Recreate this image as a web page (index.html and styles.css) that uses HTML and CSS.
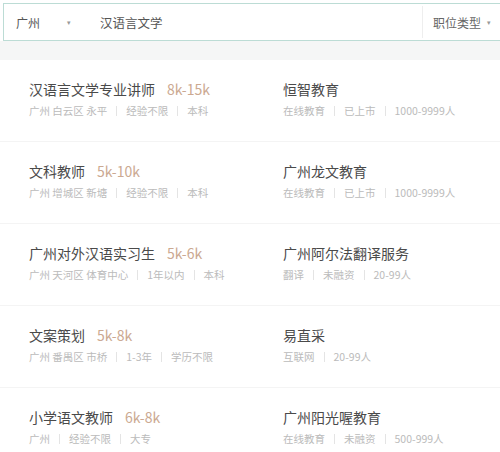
FILE: index.html
```html
<!DOCTYPE html>
<html lang="zh">
<head>
<meta charset="utf-8">
<link rel="stylesheet" href="styles.css">
</head>
<body>
<div class="page">
  <div class="search">
    <div class="city">广州<span class="arrow">▾</span></div>
    <div class="query">汉语言文学</div>
    <div class="type">职位类型<span class="arrow">▾</span></div>
  </div>
  <div class="gap"></div>
  <ul class="list">
    <li class="row">
      <div class="job">
        <div class="title">汉语言文学专业讲师<span class="salary">8k-15k</span></div>
        <div class="meta"><span>广州 白云区 永平</span><i class="sep"></i><span>经验不限</span><i class="sep"></i><span>本科</span></div>
      </div>
      <div class="company">
        <div class="title">恒智教育</div>
        <div class="meta"><span>在线教育</span><i class="sep"></i><span>已上市</span><i class="sep"></i><span>1000-9999人</span></div>
      </div>
    </li>
    <li class="row">
      <div class="job">
        <div class="title">文科教师<span class="salary">5k-10k</span></div>
        <div class="meta"><span>广州 增城区 新塘</span><i class="sep"></i><span>经验不限</span><i class="sep"></i><span>本科</span></div>
      </div>
      <div class="company">
        <div class="title">广州龙文教育</div>
        <div class="meta"><span>在线教育</span><i class="sep"></i><span>已上市</span><i class="sep"></i><span>1000-9999人</span></div>
      </div>
    </li>
    <li class="row">
      <div class="job">
        <div class="title">广州对外汉语实习生<span class="salary">5k-6k</span></div>
        <div class="meta"><span>广州 天河区 体育中心</span><i class="sep"></i><span>1年以内</span><i class="sep"></i><span>本科</span></div>
      </div>
      <div class="company">
        <div class="title">广州阿尔法翻译服务</div>
        <div class="meta"><span>翻译</span><i class="sep"></i><span>未融资</span><i class="sep"></i><span>20-99人</span></div>
      </div>
    </li>
    <li class="row">
      <div class="job">
        <div class="title">文案策划<span class="salary">5k-8k</span></div>
        <div class="meta"><span>广州 番禺区 市桥</span><i class="sep"></i><span>1-3年</span><i class="sep"></i><span>学历不限</span></div>
      </div>
      <div class="company">
        <div class="title">易直采</div>
        <div class="meta"><span>互联网</span><i class="sep"></i><span>20-99人</span></div>
      </div>
    </li>
    <li class="row">
      <div class="job">
        <div class="title">小学语文教师<span class="salary">6k-8k</span></div>
        <div class="meta"><span>广州</span><i class="sep"></i><span>经验不限</span><i class="sep"></i><span>大专</span></div>
      </div>
      <div class="company">
        <div class="title">广州阳光喔教育</div>
        <div class="meta"><span>在线教育</span><i class="sep"></i><span>未融资</span><i class="sep"></i><span>500-999人</span></div>
      </div>
    </li>
  </ul>
</div>
</body>
</html>
```

FILE: styles.css
```css
html, body {
  margin: 0;
  padding: 0;
  background: #ffffff;
  font-family: "Noto Sans CJK SC", "Noto Sans", sans-serif;
}
.page {
  width: 500px;
  height: 452px;
  overflow: hidden;
  padding-top: 3px;
  box-sizing: border-box;
}
.search {
  margin-left: 3px;
  width: 510px;
  height: 38px;
  box-sizing: border-box;
  border: 1px solid #bcdcd5;
  background: #fff;
  display: flex;
  align-items: center;
  font-size: 12px;
  color: #555;
}
.city {
  width: 96px;
  padding-left: 12px;
  box-sizing: border-box;
  display: flex;
  align-items: center;
}
.arrow {
  font-size: 7px;
  color: #999;
  margin-left: 27px;
}
.query {
  flex: 1;
  font-size: 12.5px;
  color: #555;
}
.type {
  width: 90px;
  height: 32px;
  border-left: 1px solid #eeeeee;
  padding-left: 10px;
  box-sizing: border-box;
  display: flex;
  align-items: center;
  color: #666;
}
.type .arrow {
  margin-left: 6px;
}
.gap {
  height: 19px;
  background: #f5f6f6;
}
.list {
  list-style: none;
  margin: 0;
  padding: 0;
  background: #fff;
}
.row {
  display: flex;
  height: 82px;
  box-sizing: border-box;
  padding: 19px 0 0 29px;
  border-bottom: 1px solid #f4f4f4;
}
.job {
  width: 254px;
}
.company {
  flex: 1;
}
.title {
  font-size: 14px;
  line-height: 20px;
  height: 20px;
  color: #4a4a4a;
  white-space: nowrap;
}
.salary {
  color: #cba991;
  margin-left: 12px;
}
.meta {
  margin-top: 4px;
  font-size: 10.5px;
  line-height: 16px;
  color: #bbbbbb;
  display: flex;
  align-items: center;
  white-space: nowrap;
}
.sep {
  display: inline-block;
  width: 1px;
  height: 10px;
  background: #e4e4e4;
  margin: 0 9px;
}
```
